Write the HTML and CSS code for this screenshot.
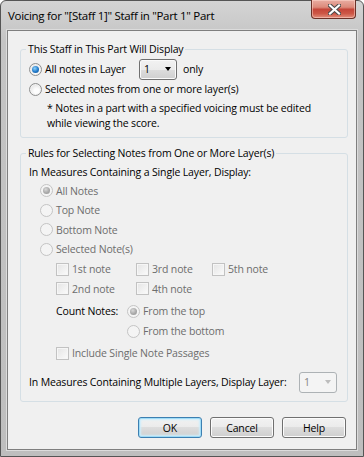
FILE: index.html
```html
<!DOCTYPE html>
<html lang="en">
<head>
	<meta charset="UTF-8">
	<title>Voicing</title>
	<link rel="stylesheet" href="styles.css">
</head>
<body>
	<div class="window">
		<div class="titlebar">
			<span class="title">Voicing for "[Staff 1]" Staff in "Part 1" Part</span>
			<span class="close">
				<svg width="13" height="11" viewBox="0 0 13 11">
					<path d="M2 1.5 L11 9.5 M11 1.5 L2 9.5" stroke="#4a4a4a" stroke-width="4.2" stroke-linecap="square"/>
					<path d="M2 1.5 L11 9.5 M11 1.5 L2 9.5" stroke="#fff" stroke-width="2.2" stroke-linecap="square"/>
				</svg>
			</span>
		</div>

		<div class="client">
			<fieldset class="group group-display">
				<legend>This Staff in This Part Will Display</legend>
				<div class="row row-layer">
					<label class="radio layer-choice"><span class="dot checked"></span>All notes in Layer</label>
					<span class="combo"><span>1</span><span class="arrow"></span></span>
					<span class="only">only</span>
				</div>
				<div class="row">
					<label class="radio"><span class="dot"></span>Selected notes from one or more layer(s)</label>
				</div>
				<p class="hint">* Notes in a part with a specified voicing must be edited<br>while viewing the score.</p>
			</fieldset>

			<fieldset class="group group-rules">
				<legend>Rules for Selecting Notes from One or More Layer(s)</legend>
				<div class="caption">In Measures Containing a Single Layer, Display:</div>

				<div class="opts off">
					<label class="radio r1"><span class="dot checked"></span>All Notes</label>
					<label class="radio r2"><span class="dot"></span>Top Note</label>
					<label class="radio r1"><span class="dot"></span>Bottom Note</label>
					<label class="radio r2"><span class="dot"></span>Selected Note(s)</label>
				</div>

				<div class="checks off">
					<label class="check r2"><span class="box"></span>1st note</label>
					<label class="check r2"><span class="box"></span>3rd note</label>
					<label class="check r2"><span class="box"></span>5th note</label>
					<label class="check r1"><span class="box"></span>2nd note</label>
					<label class="check r1"><span class="box"></span>4th note</label>
				</div>

				<div class="count">
					<span class="count-label">Count Notes:</span>
					<label class="radio off"><span class="dot checked"></span>From the top</label>
					<label class="radio off second"><span class="dot"></span>From the bottom</label>
				</div>

				<div class="include off">
					<label class="check"><span class="box"></span>Include Single Note Passages</label>
				</div>

				<div class="multi">
					<span>In Measures Containing Multiple Layers, Display Layer:</span>
					<span class="combo combo-off"><span>1</span><span class="arrow"></span></span>
				</div>
			</fieldset>

			<div class="buttons">
				<span class="btn btn-default">OK</span>
				<span class="btn">Cancel</span>
				<span class="btn">Help</span>
			</div>
		</div>
	</div>
</body>
</html>
```

FILE: styles.css
```css
* {
	margin: 0;
	padding: 0;
	box-sizing: border-box;
}

body {
	width: 364px;
	height: 457px;
	font-family: "Open Sans", "Noto Sans", sans-serif;
	font-size: 10.5px;
	letter-spacing: -0.15px;
	color: #000;
	background: #fff;
}

.window {
	width: 364px;
	height: 457px;
	display: flex;
	flex-direction: column;
	padding: 0 6px 6px;
	border: 1px solid #555;
	border-radius: 6px 6px 0 0;
	background: linear-gradient(#d4d4d4, #c4c4c4 40px, #bebebe);
}

/* title bar */
.titlebar {
	height: 29px;
	display: flex;
	align-items: center;
}
.title {
	padding-left: 1px;
	font-size: 11.5px;
	letter-spacing: -0.3px;
}
.close {
	align-self: flex-start;
	margin: -1px 1px 0 auto;
	width: 45px;
	height: 19px;
	display: flex;
	align-items: center;
	justify-content: center;
	padding-left: 2px;
	border: 1px solid #6b3128;
	border-top: 0;
	border-radius: 0 0 4px 4px;
	background: linear-gradient(#e9ada2, #dc8a7b 40%, #c5463a 52%, #cd5746 75%, #e28e7c);
	box-shadow: inset 0 0 0 1px rgba(255, 220, 210, 0.5);
}

/* client area */
.client {
	flex: 1;
	display: flex;
	flex-direction: column;
	background: #f0f0f0;
	border: 1px solid #7f7f7f;
	box-shadow: 0 0 0 1px #dcdcdc;
}

.group {
	margin: 0 8px 0 12px;
	padding: 0 8px 6px;
	border: 1px solid #d5dfe5;
	border-radius: 3px;
	min-width: 0;
}
.group legend {
	margin-left: -3px;
	padding: 0 2px;
	line-height: 14px;
}
.group-display {
	margin-top: 11px;
}
.group-rules {
	margin-top: 8px;
	padding-bottom: 8px;
}

.row {
	height: 18px;
	display: flex;
	align-items: center;
}
.row-layer {
	height: 22px;
	margin-top: 2px;
}
.layer-choice {
	width: 110px;
}
.only {
	margin-left: 6px;
}
.hint {
	margin: 3px 0 0 18px;
	line-height: 15px;
}

/* radio and check */
.radio,
.check {
	display: flex;
	align-items: center;
	white-space: nowrap;
}
.dot {
	width: 13px;
	height: 13px;
	margin-right: 3px;
	border: 1px solid #8e8f8f;
	border-radius: 50%;
	background: radial-gradient(circle at 60% 65%, #fdfdfd 25%, #e3e3e3 75%);
	box-shadow: inset 0 0 0 1px #f2f2f2;
	position: relative;
	flex: none;
}
.dot.checked::after {
	content: "";
	position: absolute;
	left: 2px;
	top: 2px;
	width: 7px;
	height: 7px;
	border-radius: 50%;
	background: radial-gradient(circle at 40% 35%, #8fd3fb, #1f78c8 55%, #134f8d);
}
.box {
	width: 13px;
	height: 13px;
	margin-right: 3px;
	border: 1px solid #bcbcbc;
	background: linear-gradient(135deg, #e4e4e4, #fbfbfb);
	box-shadow: inset 0 0 0 1px #f6f6f6;
	flex: none;
}

/* disabled controls */
.off,
.off .radio,
.off .check {
	color: #6d6d6d;
}
.off .dot {
	border-color: #c4c4c4;
	background: #f4f4f4;
	box-shadow: none;
}
.off .dot.checked::after {
	background: radial-gradient(circle at 40% 35%, #d8d8d8, #a5a5a5 60%, #9a9a9a);
}
.off .box {
	border-color: #c2c2c2;
}

.caption {
	margin-top: 3px;
	height: 18px;
	line-height: 18px;
}
.opts {
	padding-left: 11px;
}
.r1 {
	height: 19px;
}
.r2 {
	height: 20px;
}
.checks {
	display: grid;
	grid-template-columns: 80px 76px auto;
	padding-left: 27px;
}
.count {
	display: grid;
	grid-template-columns: 71px auto;
	grid-auto-rows: 20px;
	align-items: center;
	margin-top: 3px;
	padding-left: 27px;
}
.count .second {
	grid-column: 2;
}
.count .radio {
	height: 20px;
}
.include {
	margin-top: 2px;
	height: 20px;
	display: flex;
	align-items: center;
	padding-left: 27px;
}
.multi {
	margin-top: 8px;
	height: 22px;
	display: flex;
	align-items: center;
}

/* combo boxes */
.combo {
	width: 38px;
	height: 21px;
	display: flex;
	align-items: center;
	justify-content: space-between;
	padding: 0 5px 0 4px;
	border: 1px solid #707070;
	border-radius: 3px;
	background: linear-gradient(#f2f2f2, #ebebeb 50%, #dddddd 50%, #cfcfcf);
	box-shadow: inset 0 0 0 1px #fafafa;
	flex: none;
}
.arrow {
	width: 0;
	height: 0;
	border-left: 3.5px solid transparent;
	border-right: 3.5px solid transparent;
	border-top: 4px solid #000;
}
.combo-off {
	margin: 0 2px 0 auto;
	color: #838383;
	border-color: #adb2b5;
	background: #f4f4f4;
	box-shadow: none;
}
.combo-off .arrow {
	border-top-color: #bdbdbd;
}

/* buttons */
.buttons {
	display: flex;
	justify-content: flex-end;
	gap: 8px;
	margin: 15px 10px 0 0;
}
.btn {
	width: 64px;
	height: 21px;
	display: flex;
	align-items: center;
	justify-content: center;
	border: 1px solid #707070;
	border-radius: 3px;
	background: linear-gradient(#f2f2f2, #ebebeb 50%, #dddddd 50%, #cfcfcf);
	box-shadow: inset 0 0 0 1px #fcfcfc;
}
.btn-default {
	border-color: #3c7fb1;
	box-shadow: inset 0 0 0 1px #9fdcf7, inset 0 0 2px 2px #cdeefc;
}
```
